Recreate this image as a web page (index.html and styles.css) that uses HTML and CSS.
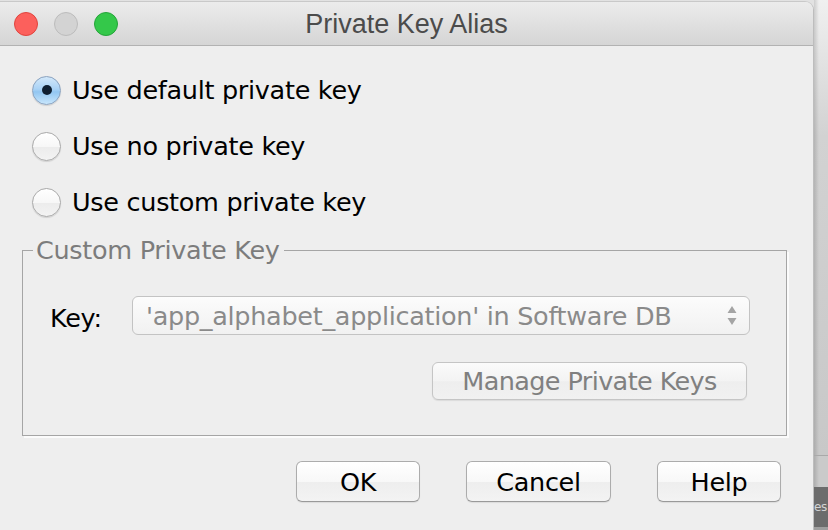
FILE: index.html
```html
<!DOCTYPE html>
<html>
<head>
<meta charset="utf-8">
<title>Private Key Alias</title>
<link rel="stylesheet" href="styles.css">
</head>
<body>
<div class="screen">
  <div class="window">
    <div class="titlebar">
      <div class="lights">
        <span class="light close"></span>
        <span class="light min"></span>
        <span class="light zoom"></span>
      </div>
      <div class="title">Private Key Alias</div>
      <div></div>
    </div>
    <div class="content">
      <div class="options">
        <label class="option"><span class="radio checked"><span class="dot"></span></span><span class="option-text">Use default private key</span></label>
        <label class="option"><span class="radio"></span><span class="option-text">Use no private key</span></label>
        <label class="option"><span class="radio"></span><span class="option-text">Use custom private key</span></label>
      </div>
      <fieldset class="group">
        <legend class="group-title">Custom Private Key</legend>
        <div class="key-row">
          <span class="key-label">Key:</span>
          <div class="combo">
            <span class="combo-text">'app_alphabet_application' in Software DB</span>
            <svg class="combo-arrows" width="10" height="19" viewBox="0 0 10 19"><path d="M5 0 L9.5 7 L0.5 7 Z M0.5 12 L9.5 12 L5 19 Z" fill="#a4a4a4"/></svg>
          </div>
        </div>
        <div class="manage-row">
          <button class="btn btn-disabled manage">Manage Private Keys</button>
        </div>
      </fieldset>
      <div class="actions">
        <button class="btn btn-ok">OK</button>
        <button class="btn btn-cancel">Cancel</button>
        <button class="btn btn-help">Help</button>
      </div>
    </div>
  </div>
  <div class="desk">
    <div class="desk-top"></div>
    <div class="desk-mid"></div>
    <div class="desk-dark"><span class="desk-text">es</span></div>
    <div class="desk-bottom"></div>
  </div>
</div>
</body>
</html>
```
FILE: styles.css
```css
html, body {
  margin: 0;
  padding: 0;
}
body {
  width: 828px;
  height: 530px;
  overflow: hidden;
  background: #e2e2e2;
  font-family: "DejaVu Sans", "Noto Sans", sans-serif;
}
.screen {
  display: flex;
  height: 530px;
}
.window {
  width: 814px;
  flex: none;
  margin-top: 1px;
  box-sizing: border-box;
  display: flex;
  flex-direction: column;
  background: #eeeeee;
  border-top: 1px solid #c9c9c9;
  border-right: 1px solid #bdbdbd;
  border-top-right-radius: 9px;
  overflow: hidden;
}
.titlebar {
  height: 43px;
  flex: none;
  border-bottom: 1px solid #b2b2b2;
  background: linear-gradient(#ececec, #d5d5d5);
  display: grid;
  grid-template-columns: 1fr auto 1fr;
  align-items: center;
}
.lights {
  display: flex;
  gap: 16px;
  padding-left: 14px;
}
.light {
  width: 24px;
  height: 24px;
  box-sizing: border-box;
  border-radius: 50%;
  display: block;
}
.light.close {
  background: #fc605c;
  border: 1px solid #e0443e;
}
.light.min {
  background: #d3d3d3;
  border: 1px solid #bcbcbc;
}
.light.zoom {
  background: #34c84a;
  border: 1px solid #25a43a;
}
.title {
  font-family: "Liberation Sans", Arial, sans-serif;
  font-size: 27px;
  line-height: 1;
  color: #4b4b4b;
  padding-top: 1px;
}
.content {
  display: flex;
  flex-direction: column;
  padding-top: 16px;
  font-size: 25.5px;
  letter-spacing: -0.3px;
}
.options {
  display: flex;
  flex-direction: column;
}
.option {
  display: flex;
  align-items: center;
  height: 56px;
  padding-left: 32px;
  gap: 11px;
  color: #000;
}
.radio {
  width: 29px;
  height: 29px;
  box-sizing: border-box;
  border-radius: 50%;
  border: 1px solid #a9a9a9;
  background: linear-gradient(#ffffff, #f7f7f7 50%, #ececec 52%, #f3f3f3);
  box-shadow: 0 1px 1px rgba(0, 0, 0, 0.12);
  display: flex;
  align-items: center;
  justify-content: center;
  flex: none;
}
.radio.checked {
  border-color: #8aa2bf;
  background: linear-gradient(#d3e8fa, #a9d2f5 45%, #92c6f1 55%, #c8e6fc);
}
.dot {
  width: 10px;
  height: 10px;
  border-radius: 50%;
  background: #0f1f31;
}
.group {
  margin: 5px 26px 0 22px;
  padding: 31px 36px 35px 10px;
  border: 1px solid #a5a5a5;
  box-shadow: 2px 2px 0 #fbfbfb;
  min-inline-size: 0;
}
.group-title {
  padding: 0 4px 0 3px;
  line-height: 30px;
  color: #7c7c7c;
}
.key-row {
  display: flex;
  align-items: center;
  height: 39px;
}
.key-label {
  width: 99px;
  box-sizing: border-box;
  padding-left: 17px;
  padding-top: 4px;
  color: #000;
  flex: none;
}
.combo {
  flex: 1;
  height: 39px;
  box-sizing: border-box;
  border: 1px solid #c3c3c3;
  border-radius: 6px;
  background: linear-gradient(#fcfcfc, #f1f1f1);
  display: flex;
  align-items: center;
  justify-content: space-between;
  padding: 0 12px 0 13px;
  color: #8a8a8a;
}
.combo-arrows {
  display: block;
}
.manage-row {
  display: flex;
  justify-content: flex-end;
  margin-top: 27px;
}
.btn {
  font-family: inherit;
  font-size: 25.5px;
  letter-spacing: -0.3px;
  height: 41px;
  box-sizing: border-box;
  padding: 0;
  border: 1px solid #acacac;
  border-bottom-color: #999999;
  border-radius: 6px;
  background: linear-gradient(#ffffff, #f8f8f8 50%, #eeeeee 52%, #f3f3f3);
  box-shadow: 0 1px 1px rgba(0, 0, 0, 0.08);
  color: #000;
}
.btn-disabled {
  color: #808080;
  border-color: #c5c5c5;
  background: linear-gradient(#fbfbfb, #f3f3f3 50%, #eeeeee 52%, #f1f1f1);
  letter-spacing: -0.6px;
}
.manage {
  width: 315px;
  height: 38px;
  margin-right: 3px;
}
.actions {
  display: flex;
  justify-content: flex-end;
  gap: 46px;
  margin-top: 25px;
  padding-right: 32px;
}
.btn-ok, .btn-help {
  width: 124px;
}
.btn-cancel {
  width: 145px;
}
.desk {
  flex: 1;
  display: flex;
  flex-direction: column;
  overflow: hidden;
}
.desk-top {
  height: 455px;
  flex: none;
  border-bottom: 1px solid #a9a9a9;
  background: linear-gradient(to right, rgba(0, 0, 0, 0.14), rgba(0, 0, 0, 0) 5px), linear-gradient(#f0f0f0, #d2d2d2 30%, #c8c8c8);
}
.desk-mid {
  height: 31px;
  flex: none;
  background: linear-gradient(to right, rgba(0, 0, 0, 0.14), rgba(0, 0, 0, 0) 5px), #cacaca;
}
.desk-dark {
  height: 40px;
  flex: none;
  background: #6c6c6c;
  color: #d4d4d4;
  font-size: 12px;
  line-height: 40px;
  overflow: hidden;
}
.desk-text {
  display: block;
  letter-spacing: -0.5px;
}
.desk-bottom {
  flex: 1;
  background: #9e9e9e;
}
```
